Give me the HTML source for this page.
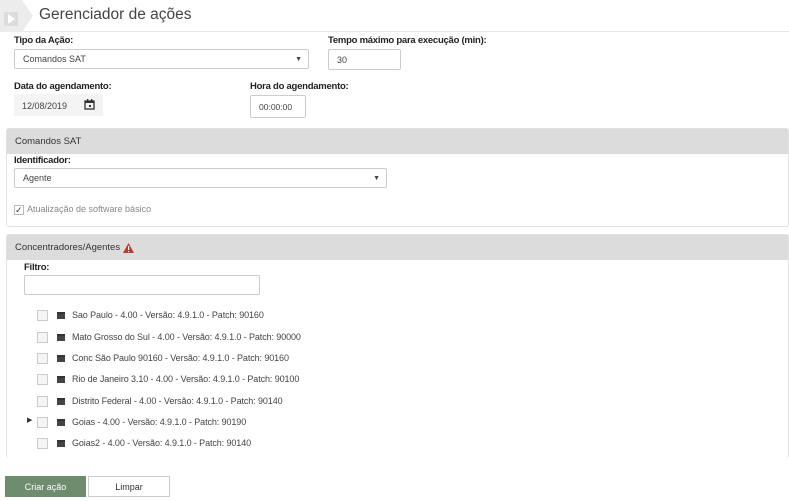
<!DOCTYPE html>
<html><head><meta charset="utf-8"><style>
*{box-sizing:border-box;margin:0;padding:0}
body{width:789px;height:501px;background:#fff;font-family:"Liberation Sans",sans-serif;font-size:9px;color:#333;position:relative;overflow:hidden}
.a{position:absolute}
.lbl{font-weight:bold;font-size:9.5px;letter-spacing:-0.25px;color:#222}
.inp{border:1px solid #ccc;border-radius:2px;background:#fff;padding-left:8px;display:flex;align-items:center;color:#444;font-size:9px}
.panel{border:1px solid #e2e2e2;border-radius:3px;left:6px;width:783px}
.ph{background:#dcdcdc;height:25px;padding-left:8px;display:flex;align-items:center;font-size:9.5px;color:#333}
.row{left:37px;height:14px;display:flex;align-items:center;font-size:9px;letter-spacing:-0.1px;color:#444}
.cb{width:11px;height:11px;border:1px solid #ccc;background:#f5f5f5;margin-right:9px}
.ic{width:8px;height:7px;background:#444;border-top:2px solid #333;margin-right:7px}
</style></head><body>
<div class="a" style="left:0;top:0;width:789px;height:32px;border-bottom:1px solid #e8e8e8"></div>
<svg class="a" style="left:0;top:0" width="34" height="32"><polygon points="0,0 22,0 33,16 22,32 0,32" fill="#ececec"/><rect x="4" y="12" width="14" height="14" fill="#dcdcdc"/><polygon points="8,14 15,19 8,24" fill="#fff"/></svg>
<div class="a" style="left:39px;top:6px;font-size:15.5px;color:#444">Gerenciador de ações</div>

<div class="a lbl" style="left:14px;top:35px">Tipo da Ação:</div>
<div class="a inp" style="left:14px;top:49px;width:295px;height:20px">Comandos SAT<span style="position:absolute;right:6px;font-size:7px">▼</span></div>
<div class="a lbl" style="left:328px;top:35px">Tempo máximo para execução (min):</div>
<div class="a inp" style="left:328px;top:49px;width:73px;height:21px">30</div>

<div class="a lbl" style="left:14px;top:81px">Data do agendamento:</div>
<div class="a" style="left:14px;top:94px;width:89px;height:22px;background:#f4f4f4;font-size:9px;color:#444;padding:7px 0 0 8px">12/08/2019</div>
<svg class="a" style="left:84px;top:99px" width="11" height="11"><rect x="1" y="2" width="9" height="8" fill="none" stroke="#333" stroke-width="1.3"/><rect x="1" y="2" width="9" height="2" fill="#333"/><rect x="3" y="0" width="1.3" height="3" fill="#333"/><rect x="7" y="0" width="1.3" height="3" fill="#333"/><rect x="5" y="6" width="2" height="2" fill="#333"/></svg>
<div class="a lbl" style="left:250px;top:81px">Hora do agendamento:</div>
<div class="a inp" style="left:250px;top:95px;width:56px;height:23px;font-size:8.5px">00:00:00</div>

<div class="a panel" style="top:128px;height:99px">
<div class="ph">Comandos SAT</div>
</div>
<div class="a lbl" style="left:14px;top:155px">Identificador:</div>
<div class="a inp" style="left:14px;top:168px;width:373px;height:20px">Agente<span style="position:absolute;right:6px;font-size:7px">▼</span></div>
<div class="a" style="left:14px;top:204px;font-size:9px;color:#888">
<span style="display:inline-block;width:10px;height:10px;border:1px solid #bbb;font-size:9px;line-height:9px;color:#333;vertical-align:-1px;margin-right:3px">✓</span>Atualização de software básico</div>

<div class="a panel" style="top:234px;height:224px;border-bottom:none">
<div class="ph">Concentradores/Agentes <svg width="11" height="10" style="margin-left:3px"><polygon points="5.5,0 11,10 0,10" fill="#c0392b"/><rect x="5" y="3" width="1.2" height="4" fill="#fff"/><rect x="5" y="8" width="1.2" height="1.2" fill="#fff"/></svg></div>
</div>
<div class="a lbl" style="left:24px;top:262px">Filtro:</div>
<div class="a inp" style="left:24px;top:275px;width:236px;height:20px"></div>

<div class="a row" style="top:308px"><span class="cb"></span><span class="ic"></span>Sao Paulo - 4.00 - Versão: 4.9.1.0 - Patch: 90160</div>
<div class="a row" style="top:330px"><span class="cb"></span><span class="ic"></span>Mato Grosso do Sul - 4.00 - Versão: 4.9.1.0 - Patch: 90000</div>
<div class="a row" style="top:351px"><span class="cb"></span><span class="ic"></span>Conc São Paulo 90160 - Versão: 4.9.1.0 - Patch: 90160</div>
<div class="a row" style="top:372px"><span class="cb"></span><span class="ic"></span>Rio de Janeiro 3.10 - 4.00 - Versão: 4.9.1.0 - Patch: 90100</div>
<div class="a row" style="top:394px"><span class="cb"></span><span class="ic"></span>Distrito Federal - 4.00 - Versão: 4.9.1.0 - Patch: 90140</div>
<div class="a" style="left:27px;top:416px;font-size:7px;color:#333">▶</div>
<div class="a row" style="top:415px"><span class="cb"></span><span class="ic"></span>Goias - 4.00 - Versão: 4.9.1.0 - Patch: 90190</div>
<div class="a row" style="top:436px"><span class="cb"></span><span class="ic"></span>Goias2 - 4.00 - Versão: 4.9.1.0 - Patch: 90140</div>

<div class="a" style="left:5px;top:476px;width:81px;height:21px;background:#6e8c6e;color:#fff;font-size:9px;display:flex;align-items:center;justify-content:center">Criar ação</div>
<div class="a" style="left:88px;top:476px;width:82px;height:21px;border:1px solid #ccc;background:#fff;color:#333;font-size:9px;display:flex;align-items:center;justify-content:center">Limpar</div>
</body></html>
